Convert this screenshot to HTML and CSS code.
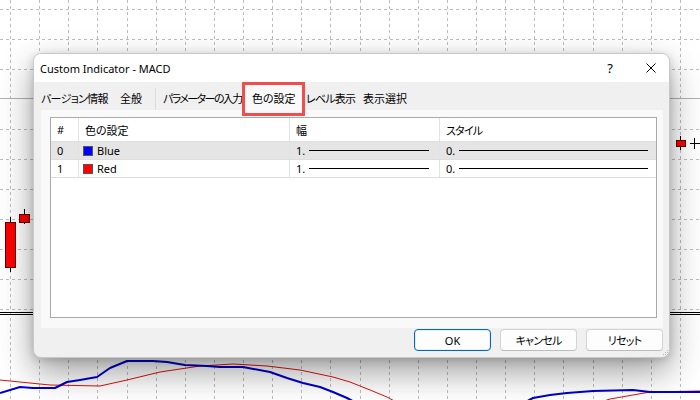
FILE: index.html
```html
<!DOCTYPE html>
<html lang="ja">
<head>
<meta charset="utf-8">
<title>Custom Indicator - MACD</title>
<link rel="stylesheet" href="styles.css">
</head>
<body>
<div class="desk">
  <svg class="chart" width="700" height="400" viewBox="0 0 700 400">
    <path class="grid" d="M10.5 0V400M39.5 0V400M68.5 0V400M97.5 0V400M127.5 0V400M156.5 0V400M185.5 0V400M214.5 0V400M243.5 0V400M272.5 0V400M301.5 0V400M330.5 0V400M360.5 0V400M389.5 0V400M418.5 0V400M447.5 0V400M476.5 0V400M505.5 0V400M534.5 0V400M563.5 0V400M593.5 0V400M622.5 0V400M651.5 0V400M680.5 0V400"/>
    <path class="grid" d="M0 9.5H700M0 39.5H700M0 69.5H700M0 129.5H700M0 159.5H700M0 189.5H700M0 219.5H700M0 249.5H700M0 279.5H700M0 309.5H700"/>
    <path class="level" d="M0 98.5H700"/>
    <path class="sep" d="M0 312.5H700M0 314.5H700"/>
    <path class="wick" d="M10.5 217V272M24.5 209V224M680.5 136V150M690 143.5H700M694.5 138V149"/>
    <rect class="bear" x="5.5" y="222.5" width="10" height="45"/>
    <rect class="bear" x="19.5" y="214.5" width="10" height="8"/>
    <rect class="bear" x="676.5" y="140.5" width="9" height="6"/>
    <polyline class="sig" points="0,380 50,385 100,386 127,380 160,372 200,366 233,364 267,366 300,370 333,377 350,382 370,390 387,397 400,404 595,404 610,399 633,395 650,392 700,391"/>
    <polyline class="macd" points="0,393 20,387 33,388 55,388 67,382 80,380 97,377 110,368 127,361 153,361 167,362 185,365 207,366 220,367 243,367 270,372 287,378 303,383 320,387 333,392 347,398 360,405 520,405 533,398 550,395 567,393 593,391 633,390 650,392 700,392"/>
  </svg>

  <div class="dialog">
    <div class="titlebar">
      <span class="title">Custom Indicator - MACD</span>
      <span class="help">?</span>
      <svg class="close" width="10" height="10" viewBox="0 0 10 10"><path d="M0.5 0.5L9.5 9.5M9.5 0.5L0.5 9.5"/></svg>
    </div>
    <div class="body">
      <div class="tabs">
        <span class="tab t1">バージョン情報</span>
        <span class="tab t2">全般</span>
        <span class="tab t3">パラメーターの入力</span>
        <span class="tab active">色の設定</span>
        <span class="tab t5">レベル表示</span>
        <span class="tab t6">表示選択</span>
      </div>
      <div class="pane">
        <div class="list">
          <div class="row head">
            <div class="cell">#</div>
            <div class="cell">色の設定</div>
            <div class="cell">幅</div>
            <div class="cell kana">スタイル</div>
          </div>
          <div class="row selected">
            <div class="cell">0</div>
            <div class="cell"><span class="swatch blue"></span>Blue</div>
            <div class="cell"><span>1.</span><span class="stroke w"></span></div>
            <div class="cell"><span>0.</span><span class="stroke s"></span></div>
          </div>
          <div class="row">
            <div class="cell">1</div>
            <div class="cell"><span class="swatch red"></span>Red</div>
            <div class="cell"><span>1.</span><span class="stroke w"></span></div>
            <div class="cell"><span>0.</span><span class="stroke s"></span></div>
          </div>
        </div>
      </div>
      <div class="footer">
        <button class="btn default">OK</button>
        <button class="btn kana">キャンセル</button>
        <button class="btn kana">リセット</button>
      </div>
    </div>
    <svg class="grip" width="6" height="6" viewBox="0 0 6 6"><path d="M5 0h1v1H5zM3 2h1v1H3zM5 2h1v1H5zM1 4h1v1H1zM3 4h1v1H3zM5 4h1v1H5z"/></svg>
  </div>
</div>
</body>
</html>
```

FILE: styles.css
```css
* { box-sizing: border-box; }
html, body { margin: 0; padding: 0; }
body {
  width: 700px;
  height: 400px;
  overflow: hidden;
  background: #ffffff;
  font-family: "Noto Sans", "Noto Sans CJK JP", sans-serif;
  font-size: 11px;
  color: #000;
  font-feature-settings: "palt";
}
.desk {
  position: relative;
  width: 700px;
  height: 400px;
}
.chart { display: block; }
.grid { stroke: #bdbdbd; stroke-width: 1; stroke-dasharray: 3 3; fill: none; }
.level { stroke: #b0b0b0; stroke-width: 1; fill: none; }
.sep { stroke: #000; stroke-width: 1; fill: none; }
.wick { stroke: #000; stroke-width: 1; fill: none; }
.bear { fill: #ff0000; stroke: #600000; stroke-width: 1; }
.sig { stroke: #e01010; stroke-width: 1; fill: none; }
.macd { stroke: #0000cc; stroke-width: 2; fill: none; stroke-linejoin: round; }

.dialog {
  position: absolute;
  left: 33px;
  top: 53px;
  width: 637px;
  height: 305px;
  display: flex;
  flex-direction: column;
  background: #f0f0f0;
  border: 1px solid #c8c8c8;
  border-radius: 8px;
  box-shadow: 0 14px 34px rgba(0, 0, 0, 0.38), 0 2px 8px rgba(0, 0, 0, 0.16);
  overflow: hidden;
}
.titlebar {
  height: 28px;
  flex: none;
  display: flex;
  align-items: center;
  padding-left: 6px;
  background: #ffffff;
}
.title { flex: 1; font-size: 11px; }
.help { width: 10px; text-align: center; font-size: 13px; margin-right: 31px; }
.close { margin-right: 13px; }
.close path { stroke: #000; stroke-width: 1; fill: none; }

.body {
  flex: 1;
  display: flex;
  flex-direction: column;
  padding: 0 6px 6px 7px;
}
.tabs {
  height: 28px;
  flex: none;
  display: flex;
  align-items: flex-start;
  position: relative;
  z-index: 1;
}
.tab {
  white-space: nowrap;
  line-height: 16px;
  padding-top: 9px;
  flex: none;
}
.t1 { width: 79px; letter-spacing: -0.7px; }
.t2 { width: 36px; height: 22px; margin-top: 6px; padding-top: 3px; margin-right: 7px; border-right: 1px solid #dadada; }
.t3 { width: 79px; letter-spacing: -1.6px; }
.active {
  width: 63px;
  height: 34px;
  padding: 6px 0 0 7px;
  border: 3px solid #ef4d50;
  background: #f9f9f9;
}
.t5 { width: 58px; padding-left: 1px; letter-spacing: -0.8px; }
.t6 { width: auto; }

.pane {
  height: 218px;
  flex: none;
  background: #f9f9f9;
  padding: 7px 6px 10px 9px;
}
.list {
  height: 201px;
  background: #fff;
  border: 1px solid #a9a9a9;
}
.row {
  display: grid;
  grid-template-columns: 28px 211px 150px 1fr;
  height: 18px;
  border-bottom: 1px solid #dedede;
}
.row.head { height: 24px; }
.row.selected { background: #e5e5e5; }
.cell {
  display: flex;
  align-items: center;
  padding-left: 6px;
  border-right: 1px solid #e3e3e3;
  white-space: nowrap;
}
.cell:last-child { border-right: none; }
.kana { letter-spacing: -0.8px; }
.swatch {
  width: 10px;
  height: 10px;
  margin-left: -2px;
  margin-right: 4px;
  border: 1px solid #555;
}
.swatch.blue { background: #0000ff; }
.swatch.red { background: #ff0000; }
.stroke {
  flex: 1;
  height: 1px;
  background: #000;
  margin-left: 4px;
}
.stroke.w { margin-right: 10px; }
.stroke.s { margin-right: 8px; }

.footer {
  margin-top: 1px;
  display: flex;
  justify-content: flex-end;
  gap: 9px;
}
.btn {
  width: 77px;
  height: 22px;
  font: inherit;
  font-size: 11px;
  color: #000;
  background: #fdfdfd;
  border: 1px solid #d3d3d3;
  border-bottom-color: #bcbcbc;
  border-radius: 4px;
  padding: 0;
}
.btn.kana { letter-spacing: -0.8px; }
.btn.default {
  border: 1px solid #0067c0;
  box-shadow: inset 0 0 0 1px #e6f0fa;
}
.grip {
  position: absolute;
  right: 1px;
  bottom: 1px;
}
.grip path { fill: #b8b8b8; }
```
